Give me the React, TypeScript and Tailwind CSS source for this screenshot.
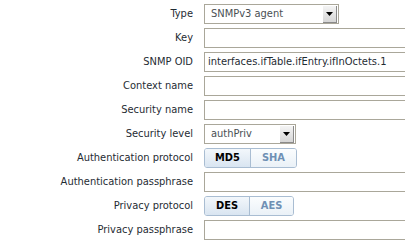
import type { ReactNode } from 'react'

const font = 'font-["DejaVu_Sans_Condensed","DejaVu_Sans",sans-serif] font-stretch-condensed text-[11px]'

function Row({ label, children }: { label: string; children: ReactNode }) {
  return (
    <div className="flex h-[20px] items-center">
      <div className="w-[194px] shrink-0 pr-[1px] text-right text-[#1f2c33]">{label}</div>
      <div className="ml-[10px] flex min-w-0 items-center">{children}</div>
    </div>
  )
}

function TextBox({ value = '' }: { value?: string }) {
  return (
    <div className="flex h-[20px] w-[230px] shrink-0 items-center border border-[#aaa79a] bg-white px-[3px] text-[#1f2c33]">
      {value}
    </div>
  )
}

function Select({ value, width }: { value: string; width: string }) {
  return (
    <div className={`flex h-[20px] items-center justify-between border border-[#aaa79a] bg-white ${width}`}>
      <span className="pl-[6px] text-[#4a4f54]">{value}</span>
      <span className="mr-[1px] flex h-[17px] w-[14px] items-center justify-center border-r border-b border-[#8a8a8a] bg-gradient-to-b from-[#f4f4f4] to-[#d6d6d6]">
        <svg width="7" height="4" viewBox="0 0 7 4">
          <path d="M0 0h7L3.5 4z" fill="#000" />
        </svg>
      </span>
    </div>
  )
}

function Segmented({ options, widths }: { options: string[]; widths: string[] }) {
  return (
    <div className="flex h-[20px] overflow-hidden rounded-[3px] border border-[#a9bdd2]">
      {options.map((opt, i) => (
        <div
          key={opt}
          className={`flex items-center justify-center font-bold ${widths[i]} ${
            i === 0
              ? 'bg-gradient-to-b from-[#f3f7fb] to-[#d9e5f1] text-black'
              : 'border-l border-[#a9bdd2] bg-gradient-to-b from-[#fbfdfe] to-[#eaf1f7] text-[#6f90b4]'
          }`}
        >
          {opt}
        </div>
      ))}
    </div>
  )
}

export default function App() {
  return (
    <div className={`h-[244px] w-[405px] overflow-hidden bg-white ${font}`}>
      <div className="flex flex-col gap-[4px] pt-[4px]">
        <Row label="Type">
          <Select value="SNMPv3 agent" width="w-[135px]" />
        </Row>
        <Row label="Key">
          <TextBox />
        </Row>
        <Row label="SNMP OID">
          <TextBox value="interfaces.ifTable.ifEntry.ifInOctets.1" />
        </Row>
        <Row label="Context name">
          <TextBox />
        </Row>
        <Row label="Security name">
          <TextBox />
        </Row>
        <Row label="Security level">
          <Select value="authPriv" width="w-[92px]" />
        </Row>
        <Row label="Authentication protocol">
          <Segmented options={['MD5', 'SHA']} widths={['w-[45px]', 'w-[46px]']} />
        </Row>
        <Row label="Authentication passphrase">
          <TextBox />
        </Row>
        <Row label="Privacy protocol">
          <Segmented options={['DES', 'AES']} widths={['w-[44px]', 'w-[44px]']} />
        </Row>
        <Row label="Privacy passphrase">
          <TextBox />
        </Row>
      </div>
    </div>
  )
}
